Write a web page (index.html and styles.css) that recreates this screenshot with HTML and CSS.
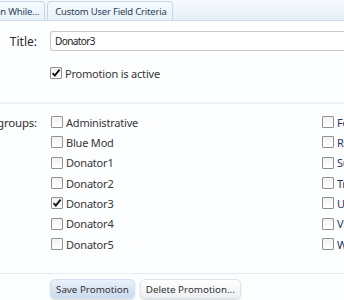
FILE: index.html
```html
<!DOCTYPE html>
<html>
<head>
<meta charset="utf-8">
<link rel="stylesheet" href="styles.css">
</head>
<body>
<div class="page">
  <div class="tabs">
    <div class="tab tab-first">Apply Promotion While...</div>
    <div class="tab">Custom User Field Criteria</div>
  </div>
  <div class="form">
    <div class="row row-title">
      <div class="label">Title:</div>
      <div class="field"><div class="input">Donator3</div></div>
    </div>
    <div class="row row-active">
      <div class="label"></div>
      <div class="field">
        <label class="check"><span class="box on"><svg viewBox="0 0 12 12" width="12" height="12"><path d="M2.6 6.2 L4.8 8.6 L9.6 2.6" fill="none" stroke="#111" stroke-width="1.9"/></svg></span>Promotion is active</label>
      </div>
    </div>
    <div class="sep"></div>
    <div class="row row-groups">
      <div class="label">Is in user groups:</div>
      <div class="groups">
        <label class="check"><span class="box"></span>Administrative</label>
        <label class="check right"><span class="box"></span>Forum Staff</label>
        <label class="check"><span class="box"></span>Blue Mod</label>
        <label class="check right"><span class="box"></span>Registered</label>
        <label class="check"><span class="box"></span>Donator1</label>
        <label class="check right"><span class="box"></span>Super Mod</label>
        <label class="check"><span class="box"></span>Donator2</label>
        <label class="check right"><span class="box"></span>Trial Mod</label>
        <label class="check"><span class="box on"><svg viewBox="0 0 12 12" width="12" height="12"><path d="M2.6 6.2 L4.8 8.6 L9.6 2.6" fill="none" stroke="#111" stroke-width="1.9"/></svg></span>Donator3</label>
        <label class="check right"><span class="box"></span>Unregistered</label>
        <label class="check"><span class="box"></span>Donator4</label>
        <label class="check right"><span class="box"></span>VIP</label>
        <label class="check"><span class="box"></span>Donator5</label>
        <label class="check right"><span class="box"></span>Wiki Editor</label>
      </div>
    </div>
  </div>
  <div class="buttons">
    <button class="btn btn-primary">Save Promotion</button>
    <button class="btn">Delete Promotion...</button>
  </div>
</div>
</body>
</html>
```

FILE: styles.css
```css
html, body {
  margin: 0;
  padding: 0;
  background: #fdfeff;
  overflow: hidden;
}
body {
  font-family: "Noto Sans", "DejaVu Sans", sans-serif;
  font-size: 11px;
  color: #333;
  width: 344px;
  height: 300px;
}
.page {
  display: flex;
  flex-direction: column;
  width: 344px;
}
.tabs {
  display: flex;
  align-items: flex-end;
  height: 21px;
  box-sizing: border-box;
  border-bottom: 1px solid #c9d9e8;
  background: linear-gradient(#f6fafd, #e6eff8);
  padding-top: 1px;
  gap: 2px;
}
.tab {
  height: 19px;
  box-sizing: border-box;
  padding: 0 5px 0 7px;
  display: flex;
  align-items: center;
  white-space: nowrap;
  color: #2a4258;
  font-size: 9.5px;
  letter-spacing: -0.2px;
  border: 1px solid #c6d8e8;
  border-bottom: none;
  border-radius: 4px 4px 0 0;
  background: linear-gradient(#f8fbfe, #e7f0f8);
}
.tab-first {
  margin-left: -74px;
}
.form {
  display: flex;
  flex-direction: column;
  height: 252px;
}
.row {
  display: flex;
  align-items: flex-start;
}
.label {
  width: 37px;
  flex: none;
  display: flex;
  justify-content: flex-end;
  white-space: nowrap;
  color: #2b2b2b;
  font-size: 11.5px;
  letter-spacing: -0.2px;
}
.field {
  margin-left: 13px;
  flex: 1;
  min-width: 0;
}
.row-title {
  margin-top: 10px;
  align-items: center;
}
.row-title .label {
  font-size: 12px;
  letter-spacing: 0;
}
.input {
  height: 20px;
  box-sizing: border-box;
  border: 1px solid #c8c8c8;
  border-right: none;
  border-radius: 3px 0 0 3px;
  background: #fff;
  padding-left: 4px;
  display: flex;
  align-items: center;
  color: #222;
  font-size: 10px;
  letter-spacing: -0.6px;
}
.row-active {
  margin-top: 12px;
}
.check {
  display: flex;
  align-items: center;
  height: 20px;
  white-space: nowrap;
  color: #363636;
  font-size: 11px;
  letter-spacing: -0.2px;
}
.box {
  width: 12px;
  height: 12px;
  box-sizing: border-box;
  border: 1px solid #8f9294;
  border-radius: 1px;
  background: linear-gradient(#f2f2f2, #ffffff);
  margin-right: 3px;
  flex: none;
  position: relative;
}
.box svg {
  position: absolute;
  left: -1px;
  top: -1px;
}
.sep {
  height: 2px;
  background: #edf3f6;
  margin-top: 19px;
}
.row-groups {
  margin-top: 8px;
}
.row-groups .label {
  height: 20px;
  align-items: center;
}
.groups {
  margin-left: 14px;
  display: grid;
  grid-template-columns: 271px 100px;
  grid-auto-rows: 20.35px;
}
.groups .right {
  color: #243466;
}
.buttons {
  border-top: 1px solid #e4ebf0;
  display: flex;
  gap: 5px;
  padding: 5px 0 0 50px;
}
.btn {
  font-family: "Noto Sans", "DejaVu Sans", sans-serif;
  font-size: 9.8px;
  color: #333;
  height: 20px;
  padding: 0 5px;
  border: 1px solid #dfe3e8;
  border-radius: 5px;
  background: linear-gradient(#ffffff, #eceff2);
  box-shadow: 0 1px 2px rgba(0,0,0,0.15);
}
.btn-primary {
  background: linear-gradient(#e9f1fa, #c9dbee);
  border-color: #d3e0ee;
}
```
